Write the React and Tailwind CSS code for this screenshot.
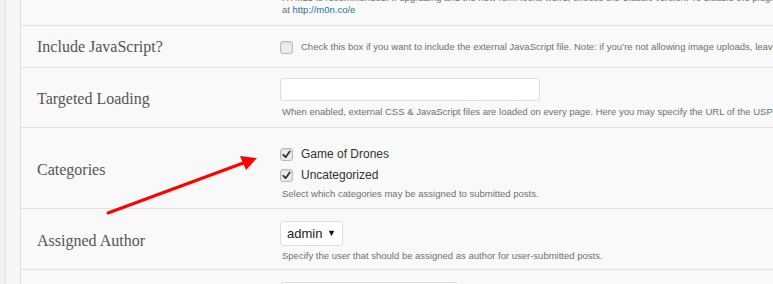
import React from "react";

const serif = { fontFamily: "Georgia, 'Liberation Serif', serif" };

function Box({ checked }) {
  return (
    <span className="inline-flex h-[13px] w-[13px] shrink-0 items-center justify-center rounded-[3px] border border-[#b4b9be] bg-[#ececec] shadow-[inset_0_1px_2px_rgba(0,0,0,0.1)]">
      {checked && (
        <svg width="9" height="9" viewBox="0 0 10 10">
          <path d="M1.5 5.3 L4 8 L8.6 1.6" fill="none" stroke="#333" strokeWidth="2" strokeLinecap="round" strokeLinejoin="round" />
        </svg>
      )}
    </span>
  );
}

function Label({ children, className = "" }) {
  return (
    <div className={"w-[259px] shrink-0 pl-[16px] text-[16px] text-[#555] " + className} style={serif}>
      {children}
    </div>
  );
}

export default function App() {
  return (
    <div className="relative flex h-[284px] w-[773px] overflow-hidden bg-[#f1f1f1] font-['Liberation_Sans',Arial,sans-serif]">
      <div className="w-[6px] shrink-0 border-r border-[#e3e3e3] bg-[#f1f1f1]" />
      <div className="w-[15px] shrink-0 border-r border-[#dedede] bg-[#f7f7f7]" />
      <div className="flex min-w-0 flex-1 flex-col bg-[#f9f9f9]">
        {/* top partial row */}
        <div className="flex h-[26px] shrink-0 border-b border-[#e1e1e1]">
          <div className="w-[259px] shrink-0" />
          <div className="mt-[-8px] whitespace-nowrap pl-[2px] text-[9.5px] leading-[12px] text-[#707070]">
            <div>HTML5 is recommended. If upgrading and the new form looks weird, choose the Classic version. To disable the plugin</div>
            <div>
              at <span className="text-[#21759b]">http://m0n.co/e</span>
            </div>
          </div>
        </div>
        {/* Include JavaScript */}
        <div className="flex h-[42px] shrink-0 items-center border-b border-[#e1e1e1]">
          <Label>Include JavaScript?</Label>
          <div className="flex items-center gap-[8px] whitespace-nowrap pt-[1px] text-[9.5px] text-[#707070]">
            <Box />
            <span>Check this box if you want to include the external JavaScript file. Note: if you’re not allowing image uploads, leave</span>
          </div>
        </div>
        {/* Targeted Loading */}
        <div className="flex h-[60px] shrink-0 items-center border-b border-[#e1e1e1]">
          <Label className="pt-[3px]">Targeted Loading</Label>
          <div className="flex flex-col">
            <div className="h-[23px] w-[260px] rounded-[3px] border border-[#dddddd] bg-white" />
            <div className="mt-[5px] whitespace-nowrap pl-[2px] text-[9.5px] leading-[12px] text-[#707070]">
              When enabled, external CSS &amp; JavaScript files are loaded on every page. Here you may specify the URL of the USP
            </div>
          </div>
        </div>
        {/* Categories */}
        <div className="flex h-[81px] shrink-0 border-b border-[#e1e1e1]">
          <Label className="self-center pt-[3px]">Categories</Label>
          <div className="flex flex-col pt-[20px]">
            <div className="flex items-center gap-[8px] text-[12px] leading-[13px] text-[#333]">
              <Box checked />
              <span>Game of Drones</span>
            </div>
            <div className="mt-[8px] flex items-center gap-[8px] text-[12px] leading-[13px] text-[#333]">
              <Box checked />
              <span>Uncategorized</span>
            </div>
            <div className="mt-[6px] whitespace-nowrap pl-[2px] text-[9.5px] leading-[12px] text-[#707070]">
              Select which categories may be assigned to submitted posts.
            </div>
          </div>
        </div>
        {/* Assigned Author */}
        <div className="flex h-[61px] shrink-0 border-b border-[#e1e1e1]">
          <Label className="self-center pt-[3px]">Assigned Author</Label>
          <div className="flex flex-col pt-[12px]">
            <div className="flex h-[25px] w-[63px] items-center justify-between rounded-[3px] border border-[#dddddd] bg-white pl-[6px] pr-[6px] text-[13px] text-[#222]">
              <span>admin</span>
              <span className="text-[9px] text-[#111]">▼</span>
            </div>
            <div className="mt-[4px] whitespace-nowrap pl-[2px] text-[9.5px] leading-[12px] text-[#707070]">
              Specify the user that should be assigned as author for user-submitted posts.
            </div>
          </div>
        </div>
        {/* next row */}
        <div className="flex flex-1 pt-[12px]">
          <div className="w-[259px] shrink-0" />
          <div className="h-[24px] w-[178px] rounded-[3px] border border-[#dddddd] bg-white" />
        </div>
      </div>
      {/* annotation arrow */}
      <svg className="pointer-events-none absolute left-0 top-0" width="773" height="284">
        <line x1="108" y1="213" x2="246" y2="162" stroke="#ff0000" strokeWidth="3" strokeLinecap="round" />
        <polygon points="257,158 240,156 246,170" fill="#ff0000" />
      </svg>
    </div>
  );
}
